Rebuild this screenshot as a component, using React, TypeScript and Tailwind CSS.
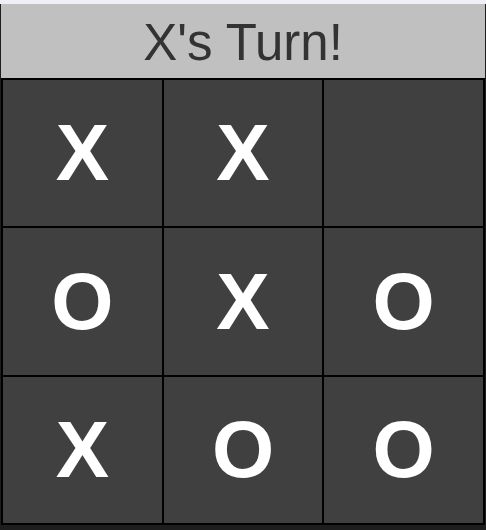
const board: string[] = ["X", "X", "", "O", "X", "O", "X", "O", "O"];
const rowHeights = ["h-[146px]", "h-[147px]", "h-[146px]"];

function Cell({ value, height }: { value: string; height: string }) {
  return (
    <div
      className={`${height} bg-[#404040] flex items-center justify-center text-white font-bold text-[80px] leading-none`}
    >
      {value}
    </div>
  );
}

export default function App() {
  return (
    <div
      className="w-[486px] h-[530px] bg-[#1e1e1e] flex flex-col overflow-hidden"
      style={{ fontFamily: '"Liberation Sans", Arial, sans-serif' }}
    >
      <div className="h-[4px] bg-[#eef0f6] shrink-0" />
      <div className="pl-[1px] w-[485px] flex flex-col">
        <div className="h-[74px] bg-[#c0c0c0] flex items-center justify-center text-[#333333] text-[51px] leading-none pt-[3px]">
          X's Turn!
        </div>
        <div className="grid grid-cols-3 gap-[2px] p-[2px] bg-black">
          {board.map((v, i) => (
            <Cell key={i} value={v} height={rowHeights[Math.floor(i / 3)]} />
          ))}
        </div>
      </div>
    </div>
  );
}
